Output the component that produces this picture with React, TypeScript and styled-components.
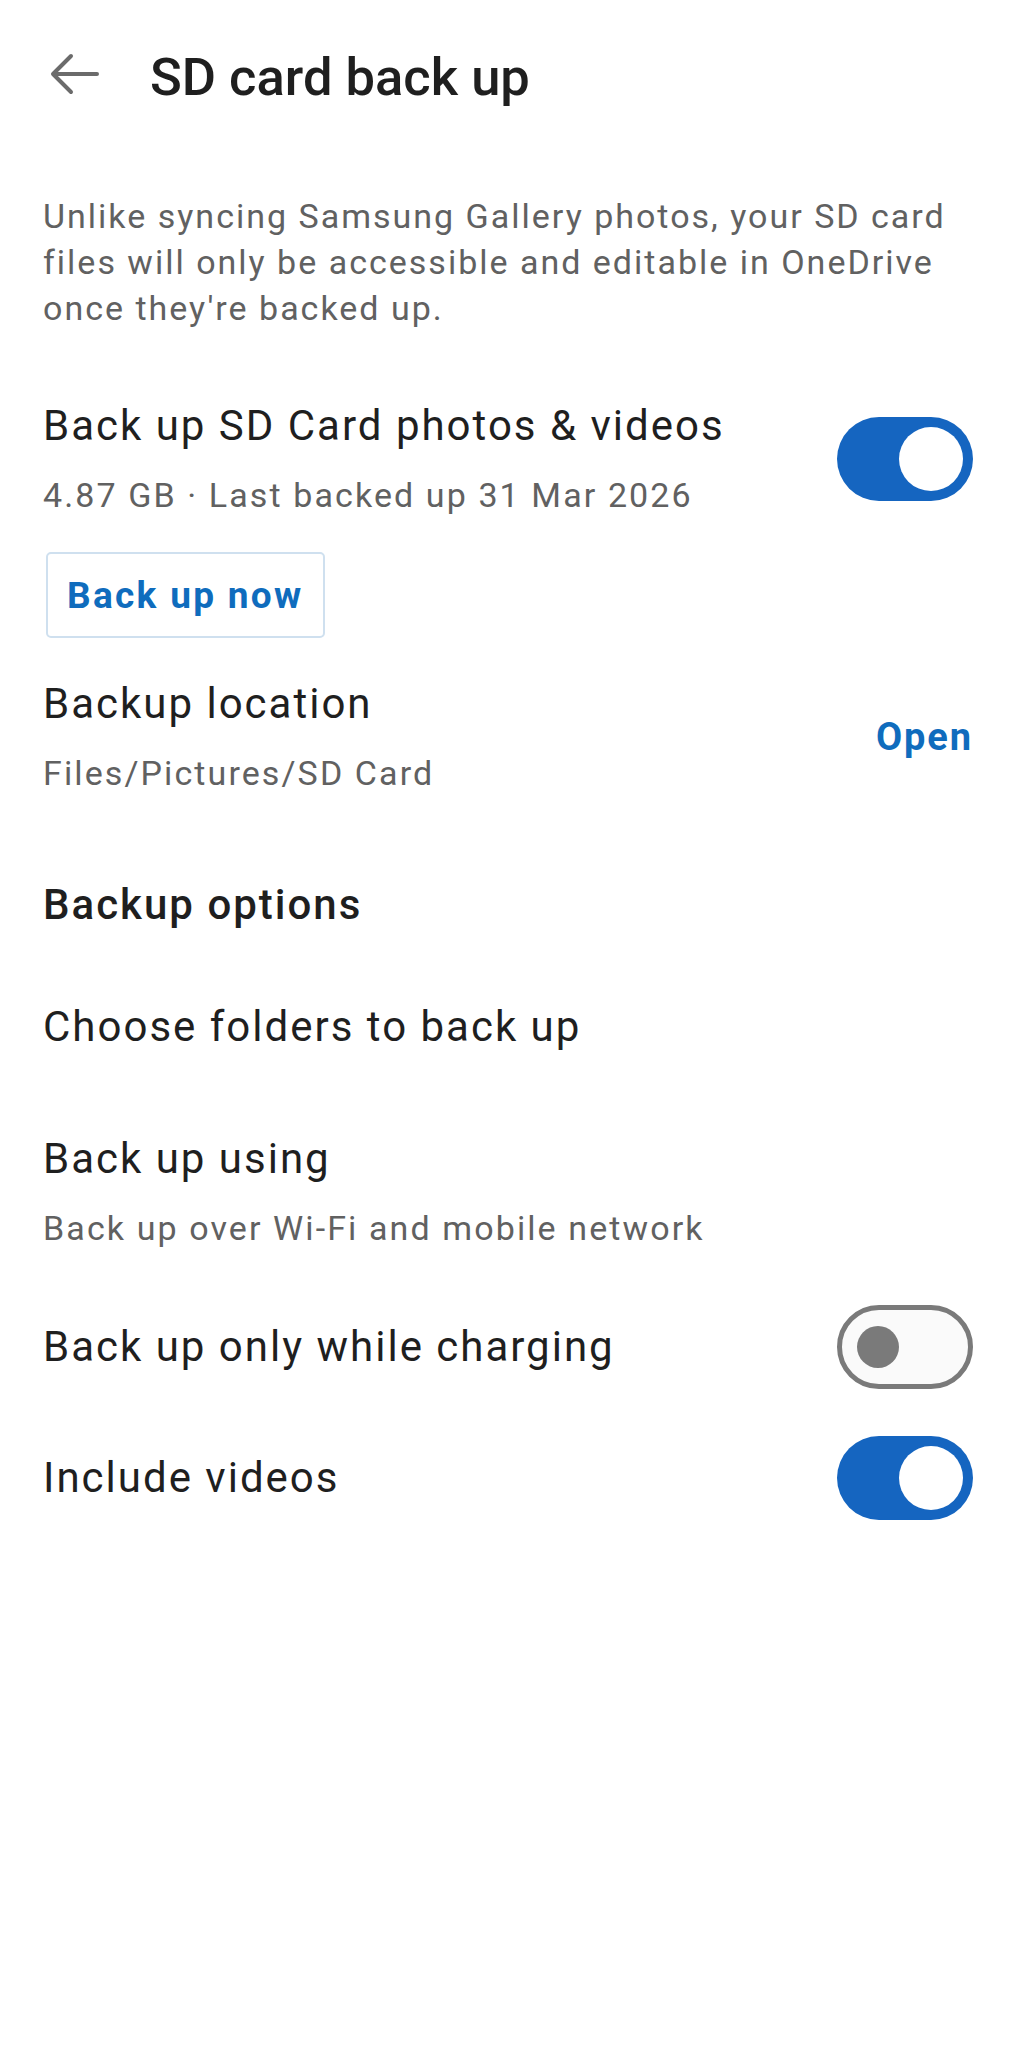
import React, { useState } from "react";
import styled, { createGlobalStyle } from "styled-components";

const GlobalStyle = createGlobalStyle`
  html, body {
    margin: 0;
    padding: 0;
    background: #ffffff;
  }
  body {
    font-family: Roboto, "Noto Sans", "Liberation Sans", sans-serif;
    color: #1f1f1f;
  }
`;

const Page = styled.div`
  width: 1016px;
  min-height: 2048px;
  background: #fff;
  display: flex;
  flex-direction: column;
  padding: 0 43px;
  box-sizing: border-box;
`;

const Header = styled.header`
  height: 154px;
  display: flex;
  align-items: center;
  gap: 50px;
`;

const BackButton = styled.button`
  border: none;
  background: none;
  padding: 0;
  margin: 0 0 6px 7px;
  display: flex;
  cursor: pointer;
`;

const Title = styled.h1`
  margin: 0;
  font-size: 52.5px;
  line-height: 54px;
  font-weight: 500;
  color: #1f1f1f;
`;

const Description = styled.p`
  margin: 39px 0 0;
  font-size: 34px;
  line-height: 46px;
  letter-spacing: 2px;
  color: #616161;
`;

const Row = styled.div<{ $top: number }>`
  margin-top: ${p => p.$top}px;
  display: flex;
  align-items: center;
  justify-content: space-between;
  gap: 24px;
`;

const TextBlock = styled.div`
  display: flex;
  flex-direction: column;
  gap: 20px;
`;

const ItemTitle = styled.div`
  font-size: 42px;
  line-height: 52px;
  letter-spacing: 2px;
  color: #1f1f1f;
`;

const ItemSub = styled.div`
  font-size: 34px;
  line-height: 46px;
  letter-spacing: 2.1px;
  color: #616161;
`;

const SectionHeading = styled.h2<{ $top: number }>`
  margin: ${p => p.$top}px 0 0;
  font-size: 42px;
  line-height: 52px;
  letter-spacing: 2px;
  font-weight: 500;
  color: #1f1f1f;
`;

const OutlineButton = styled.button`
  margin: 34px 0 0 3px;
  align-self: flex-start;
  width: 279px;
  height: 86px;
  padding: 0 0 0 19px;
  text-align: left;
  background: #fff;
  border: 2px solid #cfe0ef;
  border-radius: 5px;
  font-family: inherit;
  font-size: 37px;
  font-weight: 700;
  letter-spacing: 2.3px;
  color: #0f6cbd;
  cursor: pointer;
`;

const LinkButton = styled.button`
  border: none;
  background: none;
  padding: 0;
  font-family: inherit;
  font-size: 38px;
  font-weight: 700;
  letter-spacing: 1.9px;
  color: #0f6cbd;
  cursor: pointer;
`;

const Track = styled.button<{ $on: boolean }>`
  flex: none;
  width: 136px;
  height: 84px;
  border-radius: 42px;
  padding: 0;
  box-sizing: border-box;
  display: flex;
  align-items: center;
  cursor: pointer;
  border: ${p => (p.$on ? "none" : "5px solid #7a7a7a")};
  background: ${p => (p.$on ? "#1565c0" : "#fafafa")};
  justify-content: ${p => (p.$on ? "flex-end" : "flex-start")};
`;

const Thumb = styled.span<{ $on: boolean }>`
  display: block;
  border-radius: 50%;
  width: ${p => (p.$on ? 64 : 42)}px;
  height: ${p => (p.$on ? 64 : 42)}px;
  margin: ${p => (p.$on ? "0 10px 0 0" : "0 0 0 15px")};
  background: ${p => (p.$on ? "#ffffff" : "#7a7a7a")};
`;

const Toggle: React.FC<{ on: boolean; onChange: () => void }> = ({ on, onChange }) => (
  <Track $on={on} onClick={onChange} role="switch" aria-checked={on}>
    <Thumb $on={on} />
  </Track>
);

const ArrowLeft = () => (
  <svg width="50" height="44" viewBox="0 0 50 44" fill="none">
    <path
      d="M47 22H4M21 4L3 22L21 40"
      stroke="#6b6b6b"
      strokeWidth="4"
      strokeLinecap="round"
      strokeLinejoin="round"
    />
  </svg>
);

const App: React.FC = () => {
  const [backup, setBackup] = useState(true);
  const [charging, setCharging] = useState(false);
  const [videos, setVideos] = useState(true);

  return (
    <>
      <GlobalStyle />
      <Page>
        <Header>
          <BackButton aria-label="Back">
            <ArrowLeft />
          </BackButton>
          <Title>SD card back up</Title>
        </Header>

        <Description>
          Unlike syncing Samsung Gallery photos, your SD card files will only be accessible and
          editable in OneDrive once they're backed up.
        </Description>

        <Row $top={69}>
          <TextBlock>
            <ItemTitle>Back up SD Card photos &amp; videos</ItemTitle>
            <ItemSub>4.87 GB · Last backed up 31 Mar 2026</ItemSub>
          </TextBlock>
          <Toggle on={backup} onChange={() => setBackup(!backup)} />
        </Row>

        <OutlineButton>Back up now</OutlineButton>

        <Row $top={40}>
          <TextBlock>
            <ItemTitle>Backup location</ItemTitle>
            <ItemSub>Files/Pictures/SD Card</ItemSub>
          </TextBlock>
          <LinkButton>Open</LinkButton>
        </Row>

        <SectionHeading $top={83}>Backup options</SectionHeading>

        <Row $top={70}>
          <ItemTitle>Choose folders to back up</ItemTitle>
        </Row>

        <Row $top={80}>
          <TextBlock>
            <ItemTitle>Back up using</ItemTitle>
            <ItemSub>Back up over Wi-Fi and mobile network</ItemSub>
          </TextBlock>
        </Row>

        <Row $top={54}>
          <ItemTitle>Back up only while charging</ItemTitle>
          <Toggle on={charging} onChange={() => setCharging(!charging)} />
        </Row>

        <Row $top={47}>
          <ItemTitle>Include videos</ItemTitle>
          <Toggle on={videos} onChange={() => setVideos(!videos)} />
        </Row>
      </Page>
    </>
  );
};

export default App;
